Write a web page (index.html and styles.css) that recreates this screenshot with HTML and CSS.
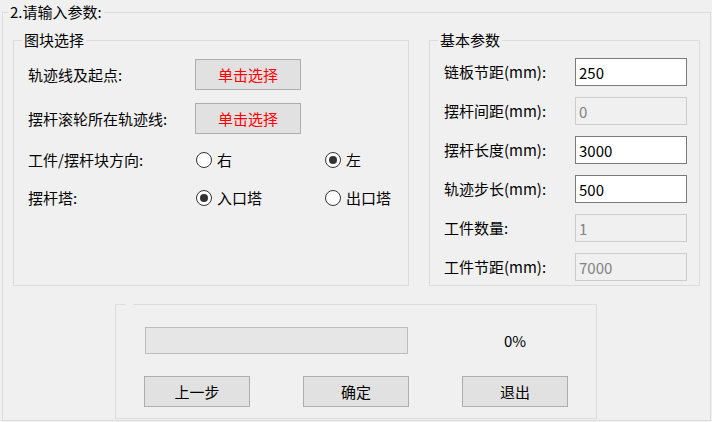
FILE: index.html
```html
<!DOCTYPE html>
<html lang="zh-CN">
<head>
<meta charset="utf-8">
<title>参数</title>
<link rel="stylesheet" href="styles.css">
</head>
<body>
<fieldset class="outer">
  <legend class="outer-title">2.请输入参数:</legend>
  <div class="outer-body">
    <div class="top-row">
      <fieldset class="group group-left">
        <legend class="group-title">图块选择</legend>
        <div class="left-body">
          <div class="row row-btn">
            <span class="label">轨迹线及起点:</span>
            <button class="btn btn-red">单击选择</button>
          </div>
          <div class="row row-btn row-btn2">
            <span class="label">摆杆滚轮所在轨迹线:</span>
            <button class="btn btn-red">单击选择</button>
          </div>
          <div class="row row-radio row-r1">
            <span class="label">工件/摆杆块方向:</span>
            <span class="radio radio-a"><span class="mark"></span>右</span>
            <span class="radio"><span class="mark on"></span>左</span>
          </div>
          <div class="row row-radio row-r2">
            <span class="label">摆杆塔:</span>
            <span class="radio radio-a"><span class="mark on"></span>入口塔</span>
            <span class="radio"><span class="mark"></span>出口塔</span>
          </div>
        </div>
      </fieldset>
      <fieldset class="group group-right">
        <legend class="group-title">基本参数</legend>
        <div class="right-body">
          <div class="frow"><span class="flabel">链板节距(mm):</span><input class="field" value="250"></div>
          <div class="frow"><span class="flabel">摆杆间距(mm):</span><input class="field field-off" value="0" disabled></div>
          <div class="frow"><span class="flabel">摆杆长度(mm):</span><input class="field" value="3000"></div>
          <div class="frow"><span class="flabel">轨迹步长(mm):</span><input class="field" value="500"></div>
          <div class="frow"><span class="flabel">工件数量:</span><input class="field field-off" value="1" disabled></div>
          <div class="frow"><span class="flabel">工件节距(mm):</span><input class="field field-off" value="7000" disabled></div>
        </div>
      </fieldset>
    </div>
    <fieldset class="panel">
      <legend class="panel-gap"></legend>
      <div class="panel-grid">
        <div class="bar"></div>
        <div class="pct">0%</div>
        <button class="btn b1">上一步</button>
        <button class="btn b2">确定</button>
        <button class="btn b3">退出</button>
      </div>
    </fieldset>
  </div>
</fieldset>
</body>
</html>
```
FILE: styles.css
```css
html, body {
  margin: 0;
  padding: 0;
  background: #f0f0f0;
}
body {
  width: 712px;
  height: 422px;
  overflow: hidden;
  font-family: "Noto Sans CJK SC", "Noto Sans", sans-serif;
  font-size: 15px;
  color: #000;
}
fieldset {
  margin: 0;
  padding: 0;
  min-width: 0;
  border: 1px solid #dcdcdc;
  box-sizing: border-box;
}
legend {
  padding: 0 2px;
  line-height: 20px;
  height: 20px;
}
.outer {
  margin: 2px 0 0 2px;
  width: 709px;
  height: 419px;
}
.outer-title {
  margin-left: 5px;
}
.outer-body {
  padding: 8px 10px 0;
}
.top-row {
  display: flex;
  gap: 20px;
}
.group {
  height: 256px;
  flex: none;
}
.group-left { width: 396px; }
.group-right { width: 271px; }
.group-title {
  margin-left: 8px;
}
.left-body {
  padding: 9px 0 0 14px;
}
.row {
  display: flex;
  align-items: center;
}
.label {
  width: 167px;
  flex: none;
  line-height: 20px;
}
.row-btn { height: 31px; }
.row-btn2 { margin-top: 13px; }
.row-radio { height: 20px; }
.row-r1 { margin-top: 16px; }
.row-r2 { margin-top: 18px; }
.btn {
  width: 106px;
  height: 31px;
  box-sizing: border-box;
  border: 1px solid #adadad;
  background: #e1e1e1;
  font: inherit;
  color: #000;
  padding: 0;
  line-height: 27px;
  text-align: center;
  flex: none;
}
.btn-red { color: #ff0000; }
.radio {
  display: flex;
  align-items: center;
  flex: none;
  line-height: 20px;
  white-space: nowrap;
}
.radio-a {
  width: 129px;
  margin-left: 1px;
}
.mark {
  width: 16px;
  height: 16px;
  box-sizing: border-box;
  border: 1px solid #333;
  border-radius: 50%;
  background: #fff;
  margin-right: 5px;
  display: flex;
  align-items: center;
  justify-content: center;
  flex: none;
}
.mark.on::after {
  content: "";
  width: 8px;
  height: 8px;
  border-radius: 50%;
  background: #333;
}
.right-body {
  padding: 8px 0 0 14px;
  display: flex;
  flex-direction: column;
  gap: 11px;
}
.frow {
  display: flex;
  align-items: center;
  height: 28px;
}
.flabel {
  width: 131px;
  flex: none;
  line-height: 20px;
}
.field {
  width: 112px;
  height: 28px;
  box-sizing: border-box;
  border: 1px solid #7a7a7a;
  background: #fff;
  font: inherit;
  color: #000;
  padding: 0 3px;
  margin: 0;
  outline: none;
  flex: none;
}
.field-off {
  border-color: #cccccc;
  background: #f0f0f0;
  color: #838383;
  -webkit-text-fill-color: #838383;
}
.panel {
  width: 482px;
  height: 115px;
  margin: 18px 0 0 102px;
}
.panel-gap {
  margin-left: 9px;
  padding: 0 4px;
  height: 0;
  line-height: 0;
}
.panel-grid {
  padding: 22px 28px 0;
  display: grid;
  grid-template-columns: 106px 1fr 106px 1fr 106px;
  grid-template-rows: 27px 31px;
  row-gap: 22px;
}
.bar {
  grid-column: 1 / 4;
  margin: 0 1px;
  box-sizing: border-box;
  border: 1px solid #bcbcbc;
  background: #e6e6e6;
}
.pct {
  grid-column: 5;
  text-align: center;
  line-height: 27px;
}
.b1 { grid-column: 1; grid-row: 2; }
.b2 { grid-column: 3; grid-row: 2; }
.b3 { grid-column: 5; grid-row: 2; }
```
